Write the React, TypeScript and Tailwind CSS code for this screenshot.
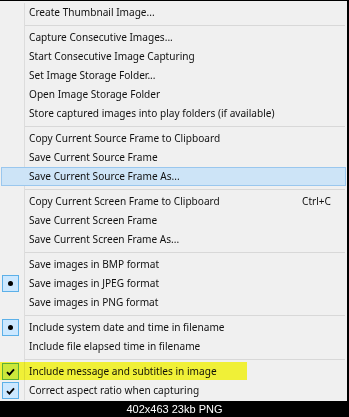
import React from "react";

type Item =
  | { kind: "sep" }
  | {
      kind: "item";
      label: string;
      shortcut?: string;
      mark?: "dot" | "check";
      hover?: boolean;
      marker?: boolean;
    };

const items: Item[] = [
  { kind: "item", label: "Create Thumbnail Image..." },
  { kind: "sep" },
  { kind: "item", label: "Capture Consecutive Images..." },
  { kind: "item", label: "Start Consecutive Image Capturing" },
  { kind: "item", label: "Set Image Storage Folder..." },
  { kind: "item", label: "Open Image Storage Folder" },
  { kind: "item", label: "Store captured images into play folders (if available)" },
  { kind: "sep" },
  { kind: "item", label: "Copy Current Source Frame to Clipboard" },
  { kind: "item", label: "Save Current Source Frame" },
  { kind: "item", label: "Save Current Source Frame As...", hover: true },
  { kind: "sep" },
  { kind: "item", label: "Copy Current Screen Frame to Clipboard", shortcut: "Ctrl+C" },
  { kind: "item", label: "Save Current Screen Frame" },
  { kind: "item", label: "Save Current Screen Frame As..." },
  { kind: "sep" },
  { kind: "item", label: "Save images in BMP format" },
  { kind: "item", label: "Save images in JPEG format", mark: "dot" },
  { kind: "item", label: "Save images in PNG format" },
  { kind: "sep" },
  { kind: "item", label: "Include system date and time in filename", mark: "dot" },
  { kind: "item", label: "Include file elapsed time in filename" },
  { kind: "sep" },
  { kind: "item", label: "Include message and subtitles in image", mark: "check", marker: true },
  { kind: "item", label: "Correct aspect ratio when capturing", mark: "check" },
];

function Check() {
  return (
    <svg width="9" height="8" viewBox="0 0 9 8">
      <path d="M1 4.2 L3.4 6.6 L8 1.4" fill="none" stroke="#000" strokeWidth="1.9" />
    </svg>
  );
}

export default function App() {
  return (
    <div
      className="w-[349px] h-[417px] bg-black flex flex-col"
      style={{ fontFamily: '"Noto Sans", "Open Sans", sans-serif' }}
    >
      <div className="h-[401px] bg-[#f0f0f0] border-t border-black border-r-2 flex flex-col pt-[2px] text-[10.1px] text-[#111]">
        {items.map((it, i) =>
          it.kind === "sep" ? (
            <div key={i} className="h-[6px] flex">
              <div className="w-[25px] shrink-0 border-r border-[#dcdcdc]" />
              <div className="flex-1 flex items-center pr-[2px]">
                <div className="w-full h-px bg-[#d8d8d8]" />
              </div>
            </div>
          ) : it.hover ? (
            <div key={i} className="h-[19px] flex items-center pl-px pr-px">
              <div className="w-full h-full flex items-center bg-[#cde4f7] border border-[#9ac7ee] pl-[27px]">
                <span className="leading-none">{it.label}</span>
              </div>
            </div>
          ) : (
            <div key={i} className="relative h-[19px] flex">
              <div className="w-[25px] shrink-0 border-r border-[#dcdcdc] flex items-center pl-[2px]">
                {it.mark && (
                  <div className="w-[17px] h-[17px] bg-[#cce8ff] border border-[#5cb0e8] flex items-center justify-center">
                    {it.mark === "dot" ? (
                      <div className="w-[5px] h-[5px] rounded-full bg-black" />
                    ) : (
                      <Check />
                    )}
                  </div>
                )}
              </div>
              <div className="flex-1 flex items-center pl-[4px] pr-[16px]">
                <span className="leading-none whitespace-nowrap">{it.label}</span>
                {it.shortcut && (
                  <span className="ml-auto leading-none">{it.shortcut}</span>
                )}
              </div>
              {it.marker && (
                <div className="absolute left-0 top-0 w-[247px] h-[18px] bg-[#ffff3a] mix-blend-multiply" />
              )}
            </div>
          )
        )}
      </div>
      <div
        className="flex-1 flex items-center justify-center text-white text-[11px]"
        style={{ fontFamily: '"Liberation Sans", Arial, sans-serif' }}
      >
        402x463 23kb PNG
      </div>
    </div>
  );
}
